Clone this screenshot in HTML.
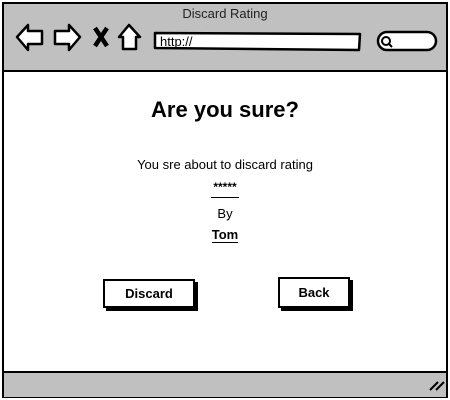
<!DOCTYPE html>
<html><head><style>
body{margin:0;width:450px;height:400px;background:#fff;font-family:"Liberation Sans",sans-serif;position:relative;overflow:hidden}
.a{position:absolute}
.c{position:absolute;left:0;width:450px;text-align:center;color:#000}
.btn{position:absolute;border:2px solid #000;background:#fff;box-shadow:3px 3px 0 #000;font-weight:bold;font-size:13px;text-align:center;box-sizing:border-box}
</style></head><body>
<div class="a" style="left:2px;top:2px;width:442px;height:392px;border:2px solid #000;"></div>
<div class="a" style="left:4px;top:4px;width:442px;height:66px;background:#c0c0c0;border-bottom:2px solid #000"></div>
<div class="a" style="left:4px;top:371px;width:442px;height:24px;background:#c0c0c0;border-top:2px solid #000"></div>
<div class="c" style="top:6px;font-size:13px;color:#222">Discard Rating</div>
<svg class="a" style="left:0;top:0" width="450" height="400">
<g fill="#fff" stroke="#000" stroke-width="2.5" stroke-linejoin="round">
<path d="M17 37 L28 25 L28 31 L42 31 L42 44 L28 44 L28 50 Z"/>
<path d="M80 37 L69 25 L69 31 L55 31 L55 44 L69 44 L69 50 Z"/>
<path d="M119 37 L129 25 L140 37 L136 37 L136 49 L123 49 L123 37 Z"/>
<path d="M155 33 L360 34 L359 50 L155 48 Z"/>
<rect x="378" y="32" width="58" height="18" rx="9"/>
</g>
<path d="M95 28 L107 46 M107 28 L95 46" stroke="#000" stroke-width="4.5"/>
<circle cx="386" cy="41" r="4" fill="none" stroke="#000" stroke-width="2"/>
<path d="M389 44 L392 47" stroke="#000" stroke-width="2"/>
<path d="M430 390 L438 382 M436 390 L444 382" stroke="#000" stroke-width="2"/>
</svg>
<div class="a" style="left:160px;top:34px;font-size:13px">http://</div>
<div class="c" style="top:97px;font-size:22px;font-weight:bold">Are you sure?</div>
<div class="c" style="top:157px;font-size:13px">You sre about to discard rating</div>
<div class="c" style="top:180px;font-size:12px;font-weight:bold"><span style="border-bottom:1.5px solid #000;padding:0 2px 3px">*****</span></div>
<div class="c" style="top:206px;font-size:13px">By</div>
<div class="c" style="top:227px;font-size:13px;font-weight:bold"><span style="border-bottom:1.5px solid #000">Tom</span></div>
<div class="btn" style="left:103px;top:279px;width:92px;height:29px;line-height:25px">Discard</div>
<div class="btn" style="left:278px;top:277px;width:72px;height:31px;line-height:27px">Back</div>
</body></html>
